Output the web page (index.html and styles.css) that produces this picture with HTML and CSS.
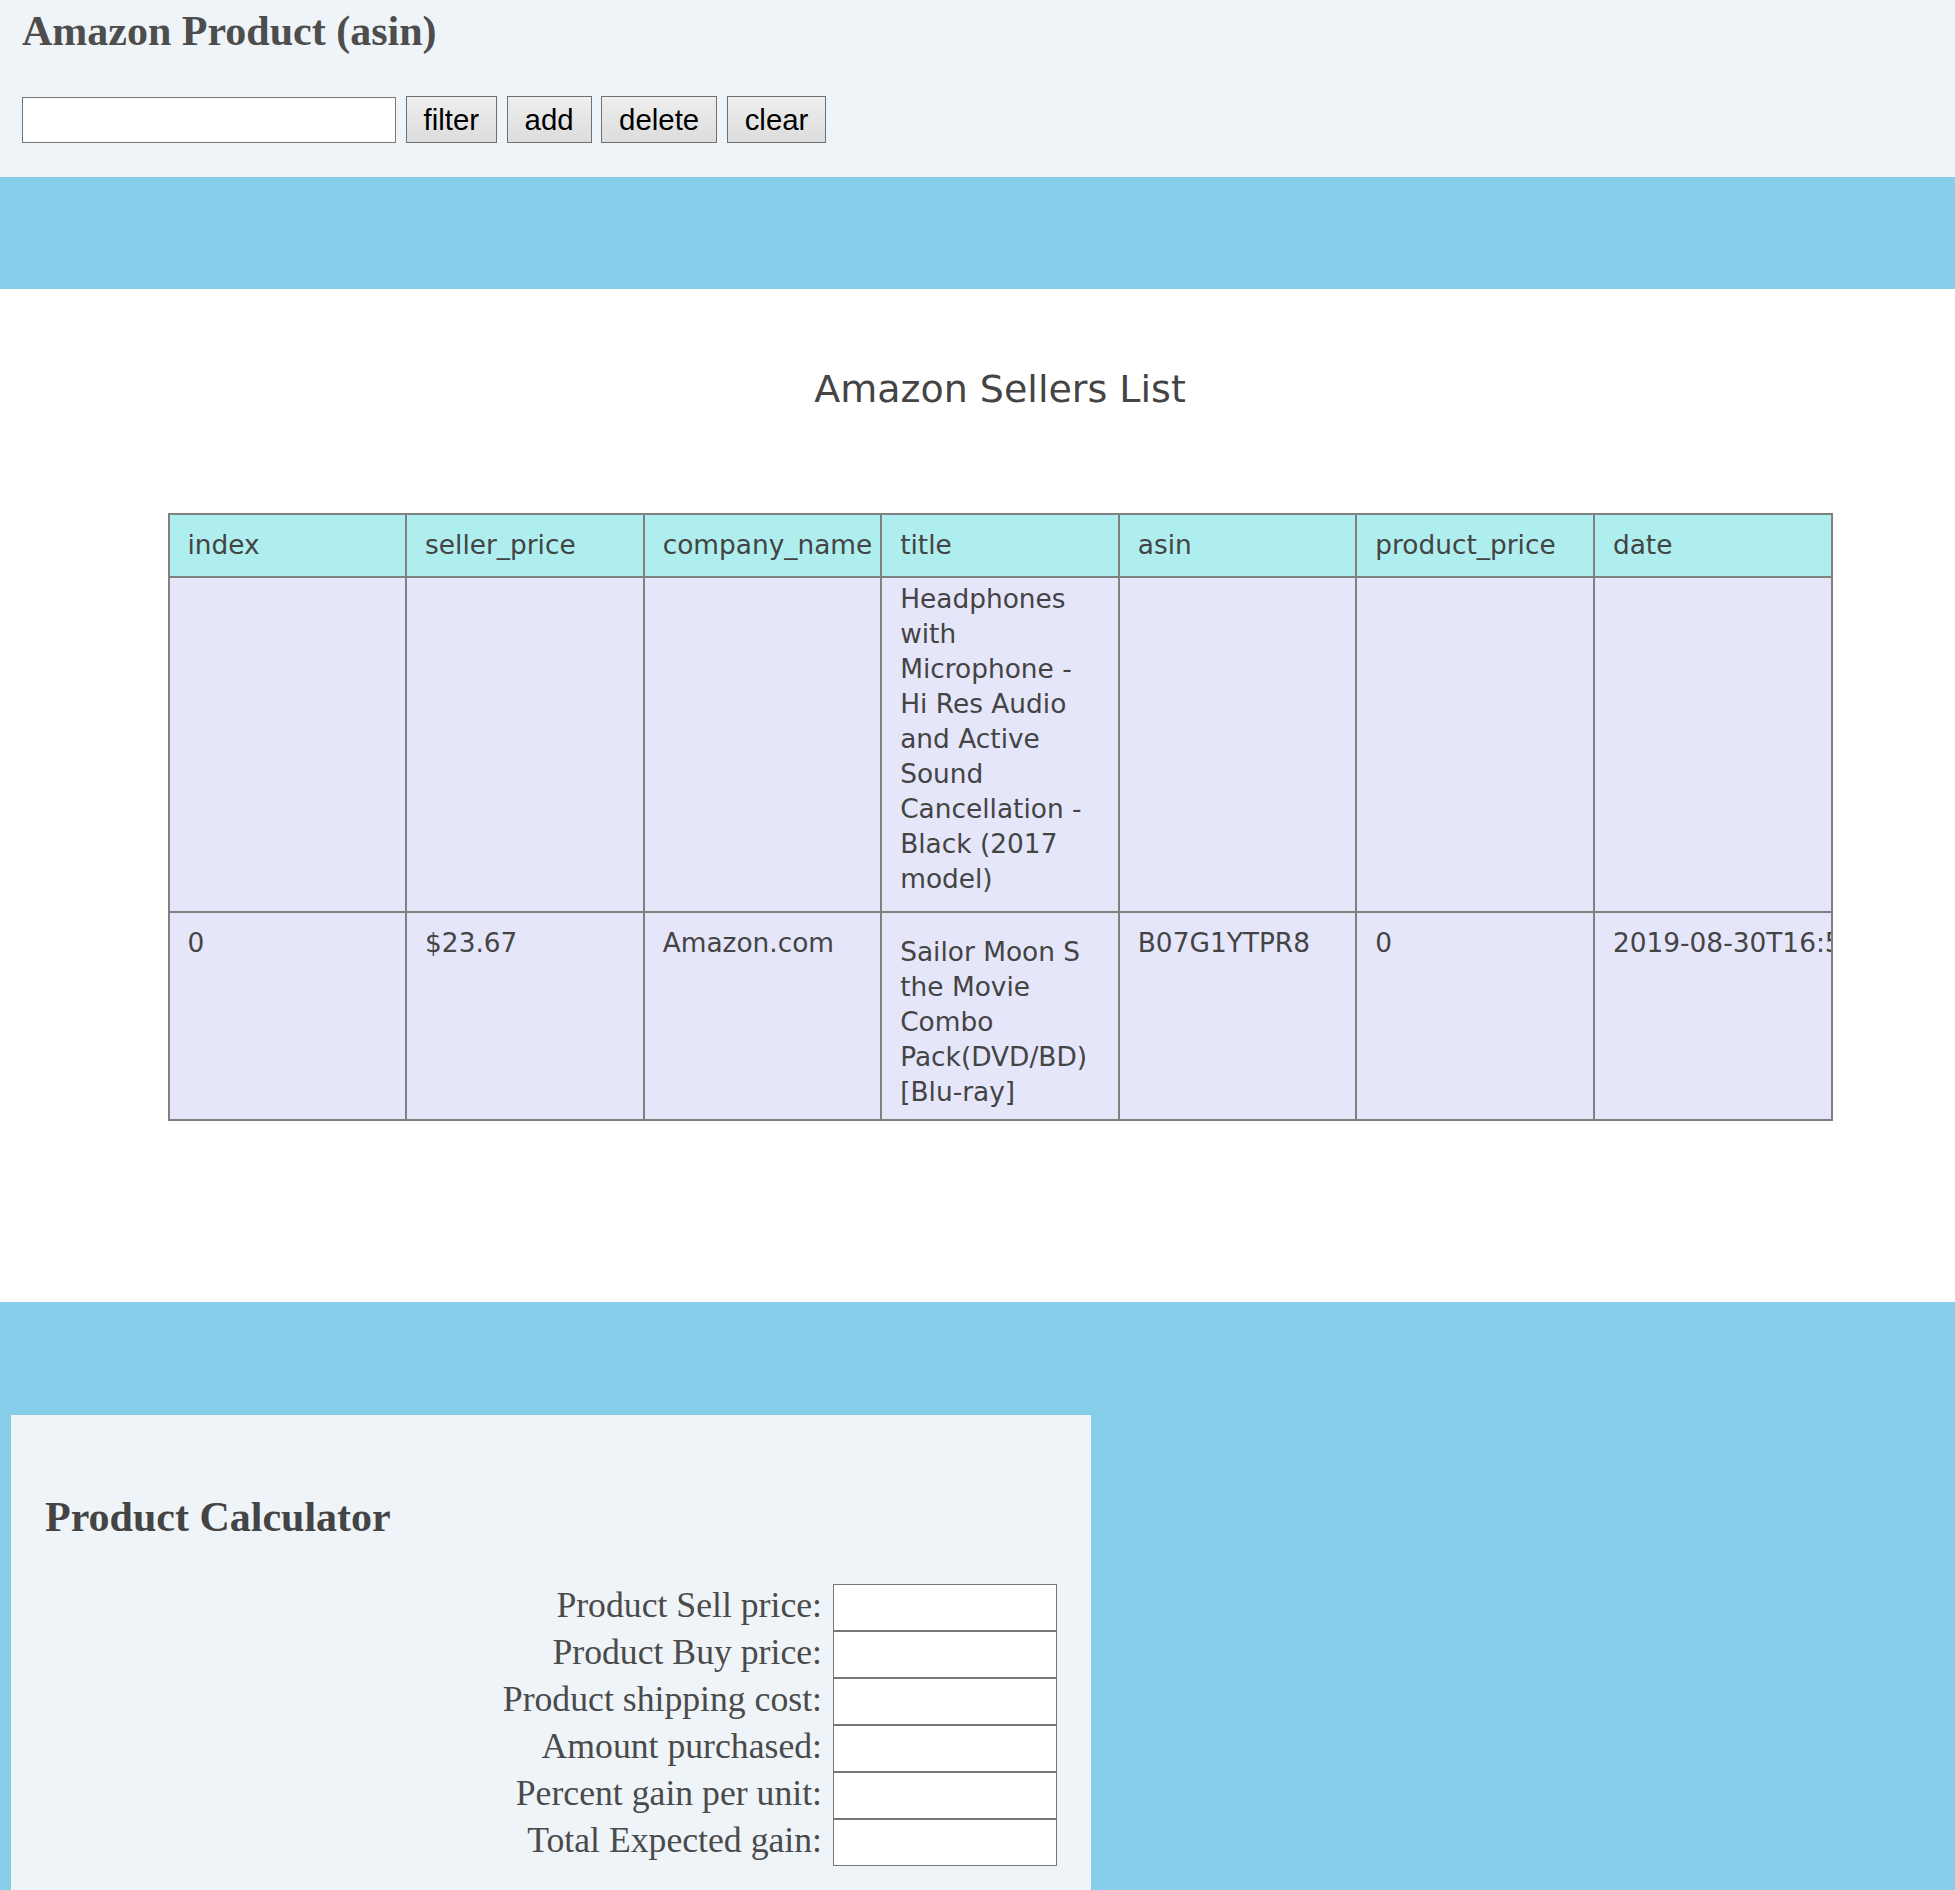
FILE: index.html
```html
<!DOCTYPE html>
<html lang="en">
<head>
<meta charset="utf-8">
<title>Amazon Product (asin)</title>
<link rel="stylesheet" href="styles.css">
</head>
<body>
<header class="top">
  <h1 class="page-title">Amazon Product (asin)</h1>
  <div class="controls">
    <input class="asin-input" type="text">
    <button class="btn" type="button">filter</button>
    <button class="btn" type="button">add</button>
    <button class="btn" type="button">delete</button>
    <button class="btn" type="button">clear</button>
  </div>
</header>
<div class="band"></div>
<main class="sellers">
  <h2 class="sellers-title">Amazon Sellers List</h2>
  <table class="sellers-table">
    <thead>
      <tr>
        <th>index</th>
        <th>seller_price</th>
        <th>company_name</th>
        <th>title</th>
        <th>asin</th>
        <th>product_price</th>
        <th>date</th>
      </tr>
    </thead>
    <tbody>
      <tr>
        <td></td>
        <td></td>
        <td></td>
        <td class="title-a">Headphones with Microphone - Hi Res Audio and Active Sound Cancellation - Black (2017 model)</td>
        <td></td>
        <td></td>
        <td></td>
      </tr>
      <tr>
        <td>0</td>
        <td>$23.67</td>
        <td>Amazon.com</td>
        <td class="title-b">Sailor Moon S the Movie Combo Pack(DVD/BD) [Blu-ray]</td>
        <td>B07G1YTPR8</td>
        <td>0</td>
        <td class="nowrap">2019-08-30T16:52:44.000Z</td>
      </tr>
    </tbody>
  </table>
</main>
<section class="calc-area">
  <div class="calc">
    <h2 class="calc-title">Product Calculator</h2>
    <div class="calc-form">
      <label class="calc-label">Product Sell price:</label><input class="calc-input" type="text">
      <label class="calc-label">Product Buy price:</label><input class="calc-input" type="text">
      <label class="calc-label">Product shipping cost:</label><input class="calc-input" type="text">
      <label class="calc-label">Amount purchased:</label><input class="calc-input" type="text">
      <label class="calc-label">Percent gain per unit:</label><input class="calc-input" type="text">
      <label class="calc-label">Total Expected gain:</label><input class="calc-input" type="text">
    </div>
  </div>
</section>
</body>
</html>
```
FILE: styles.css
```css
html, body {
  margin: 0;
  padding: 0;
}
body {
  font-family: "Liberation Serif", "Times New Roman", serif;
  color: #444;
  background: #fff;
}

/* top bar */
.top {
  box-sizing: border-box;
  height: 177px;
  background: #eff4f8;
  padding: 7px 0 0 22px;
}
.page-title {
  margin: 0;
  font-family: "Liberation Serif", "Times New Roman", serif;
  font-size: 42px;
  font-weight: bold;
  color: #4d4d4d;
  line-height: normal;
}
.controls {
  display: flex;
  align-items: flex-end;
  gap: 9.5px;
  margin-top: 41px;
}
.asin-input {
  box-sizing: border-box;
  width: 374px;
  height: 46px;
  margin: 0;
  border: 1px solid #767676;
  background: #fff;
  padding: 0 4px;
}
.btn {
  box-sizing: border-box;
  height: 47px;
  margin: 0;
  padding: 0 17px;
  font-family: "Liberation Sans", Arial, sans-serif;
  font-size: 29.4px;
  color: #000;
  border: 1px solid #707070;
  background: linear-gradient(#efefef, #dcdcdc);
}

.band {
  height: 112px;
  background: #87ceeb;
}

/* sellers list */
.sellers {
  box-sizing: border-box;
  height: 1013px;
  padding: 0 0 0 45px;
  background: #fff;
  overflow: hidden;
}
.sellers-title {
  margin: 78px 0 102px;
  font-family: "DejaVu Sans", Verdana, sans-serif;
  font-size: 38px;
  font-weight: normal;
  line-height: normal;
  text-align: center;
  color: #444;
}
.sellers-table {
  width: 1665px;
  margin: 0 auto;
  table-layout: fixed;
  border-collapse: collapse;
  border: 2px solid #808080;
  font-family: "DejaVu Sans", Verdana, sans-serif;
  font-size: 26.4px;
  line-height: 35px;
  color: #444;
}
.sellers-table th,
.sellers-table td {
  border: 2px solid #808080;
  text-align: left;
  vertical-align: top;
  overflow: hidden;
  font-weight: normal;
}
.sellers-table th {
  background: #afeeee;
  padding: 12px 18px 14px;
  white-space: nowrap;
  overflow: visible;
}
.sellers-table td {
  background: #e6e6fa;
  padding: 12px 18px 8px;
}
.sellers-table td.title-a {
  padding: 3px 18px 15px;
}
.sellers-table td.title-b {
  padding: 21px 18px 10px;
}
.sellers-table td.nowrap {
  white-space: nowrap;
}

/* calculator */
.calc-area {
  background: #87ceeb;
  padding: 113px 0 0 11px;
}
.calc {
  box-sizing: border-box;
  width: 1080px;
  min-height: 520px;
  background: #eff4f8;
  padding: 78px 34px 40px;
}
.calc-title {
  margin: 0 0 43px;
  font-family: "Liberation Serif", "Times New Roman", serif;
  font-size: 42px;
  font-weight: bold;
  line-height: normal;
  color: #444;
}
.calc-form {
  display: grid;
  grid-template-columns: max-content 224px;
  justify-content: end;
  column-gap: 11px;
}
.calc-label {
  font-family: "Liberation Serif", "Times New Roman", serif;
  font-size: 35.7px;
  line-height: 43px;
  padding-bottom: 4px;
  text-align: right;
  color: #4a4a4a;
}
.calc-input {
  box-sizing: border-box;
  width: 224px;
  height: 47px;
  margin: 0;
  border: 1px solid #767676;
  background: #fff;
}
```
